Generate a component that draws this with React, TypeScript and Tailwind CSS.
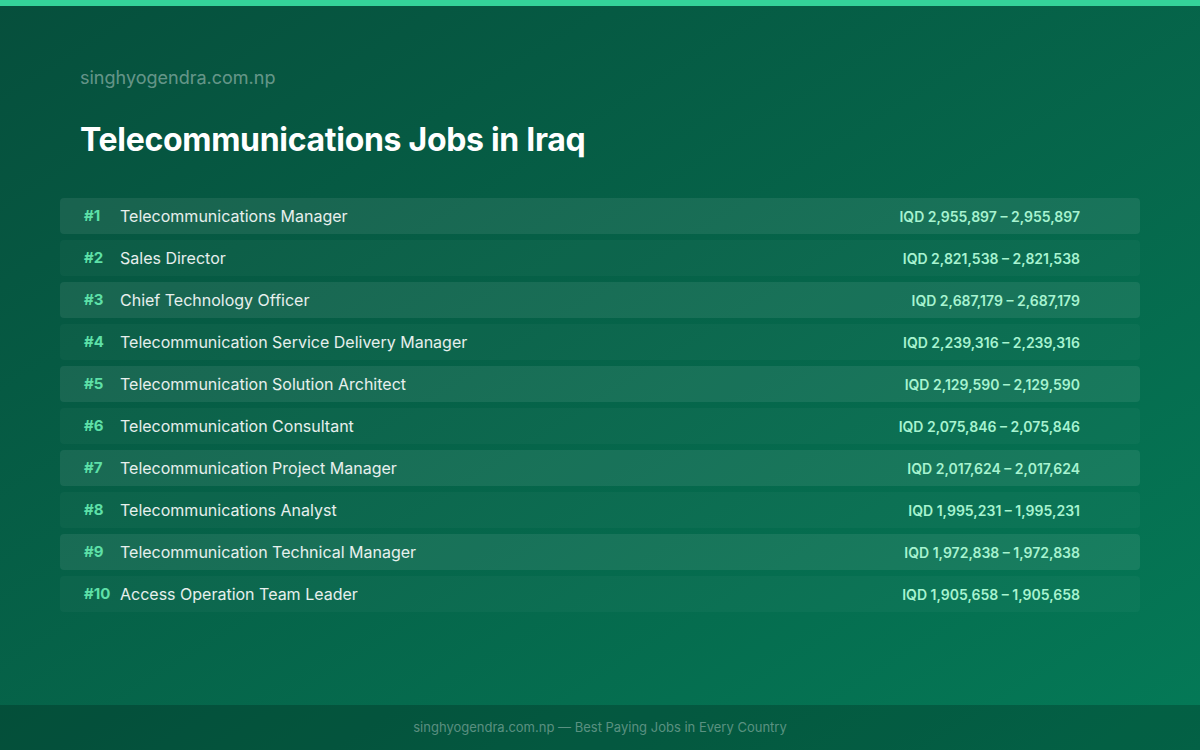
const rows: [string, string][] = [
  ["Telecommunications Manager", "IQD 2,955,897 – 2,955,897"],
  ["Sales Director", "IQD 2,821,538 – 2,821,538"],
  ["Chief Technology Officer", "IQD 2,687,179 – 2,687,179"],
  ["Telecommunication Service Delivery Manager", "IQD 2,239,316 – 2,239,316"],
  ["Telecommunication Solution Architect", "IQD 2,129,590 – 2,129,590"],
  ["Telecommunication Consultant", "IQD 2,075,846 – 2,075,846"],
  ["Telecommunication Project Manager", "IQD 2,017,624 – 2,017,624"],
  ["Telecommunications Analyst", "IQD 1,995,231 – 1,995,231"],
  ["Telecommunication Technical Manager", "IQD 1,972,838 – 1,972,838"],
  ["Access Operation Team Leader", "IQD 1,905,658 – 1,905,658"],
];

export default function App() {
  return (
    <div
      className="w-[1200px] h-[750px] flex flex-col bg-gradient-to-br from-[#064f3c] to-[#047a57] text-white overflow-hidden"
      style={{ fontFamily: "Inter, 'Noto Sans', sans-serif" }}
    >
      <div className="h-[6px] bg-[#34d399] shrink-0" />
      <div className="flex-1 flex flex-col px-[60px]">
        <div className="pl-[20px] pt-[60px] text-[18px] leading-[24px] text-white/40">singhyogendra.com.np</div>
        <h1 className="pl-[20px] mt-[30px] text-[32px] leading-[40px] font-bold tracking-[-0.3px]">Telecommunications Jobs in Iraq</h1>
        <div className="mt-[38px] flex flex-col gap-[6px]">
          {rows.map(([name, pay], i) => (
            <div
              key={i}
              className={`h-[36px] rounded-[4px] flex items-center pl-[24px] pr-[60px] ${i % 2 === 0 ? "bg-white/[0.08]" : "bg-white/[0.03]"}`}
            >
              <span className="w-[36px] text-[15px] font-bold text-[#5ee0a8]">#{i + 1}</span>
              <span className="flex-1 text-[16px] text-white/90">{name}</span>
              <span className="text-[14px] font-semibold text-[#a7f3d0]">{pay}</span>
            </div>
          ))}
        </div>
      </div>
      <div className="h-[45px] shrink-0 bg-black/20 flex items-center justify-center text-[13px] text-white/35">
        singhyogendra.com.np — Best Paying Jobs in Every Country
      </div>
    </div>
  );
}
